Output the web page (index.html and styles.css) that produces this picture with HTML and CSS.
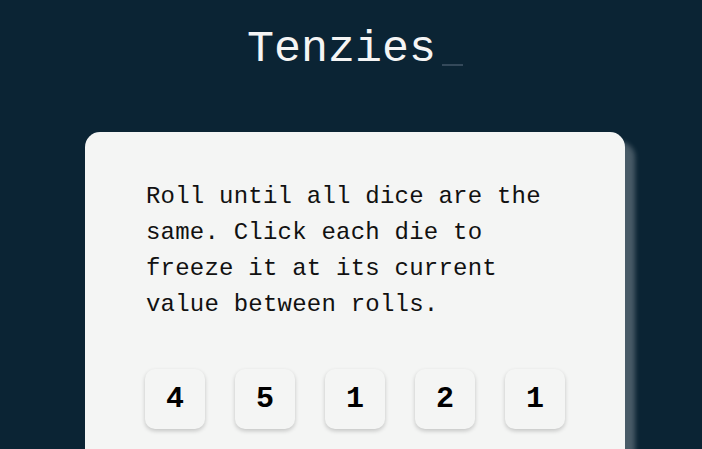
FILE: index.html
```html
<!DOCTYPE html>
<html lang="en">
<head>
<meta charset="utf-8">
<title>Tenzies</title>
<link rel="stylesheet" href="styles.css">
</head>
<body>
<div class="page">
  <h1 class="title">Tenzies<span class="cursor"></span></h1>
  <main class="card">
    <p class="instructions">Roll until all dice are the same. Click each die to freeze it at its current value between rolls.</p>
    <div class="dice">
      <button class="die">4</button>
      <button class="die">5</button>
      <button class="die">1</button>
      <button class="die">2</button>
      <button class="die">1</button>
    </div>
  </main>
</div>
</body>
</html>
```

FILE: styles.css
```css
html, body {
  margin: 0;
  padding: 0;
  background: #0B2434;
  height: 100%;
  overflow: hidden;
}

.page {
  padding-left: 8px;
  display: flex;
  flex-direction: column;
  align-items: center;
  font-family: "Liberation Mono", "DejaVu Sans Mono", monospace;
}

.title {
  margin: 24px 0 0;
  font-size: 45px;
  font-weight: 400;
  line-height: 52px;
  color: #F5F5F5;
  display: flex;
  align-items: flex-end;
}

.cursor {
  display: inline-block;
  width: 21px;
  height: 2px;
  margin: 0 0 10px 6px;
  background: #34495a;
}

.card {
  margin-top: 56px;
  width: 540px;
  box-sizing: border-box;
  padding: 47px 60px 60px;
  background: #F4F5F4;
  border-radius: 15px;
  box-shadow: 10px 10px 5px rgba(255, 255, 255, 0.25);
}

.instructions {
  margin: 0;
  font-size: 24px;
  line-height: 36px;
  letter-spacing: 0.22px;
  color: #111;
  padding-left: 1px;
}

.dice {
  margin-top: 46px;
  display: flex;
  gap: 30px;
}

.die {
  width: 60px;
  height: 60px;
  border: none;
  border-radius: 10px;
  background: #F4F5F4;
  box-shadow: 0 2px 4px rgba(0, 0, 0, 0.2);
  font-family: "Liberation Mono", "DejaVu Sans Mono", monospace;
  font-size: 30px;
  font-weight: 700;
  color: #000;
  padding: 0;
}
```
